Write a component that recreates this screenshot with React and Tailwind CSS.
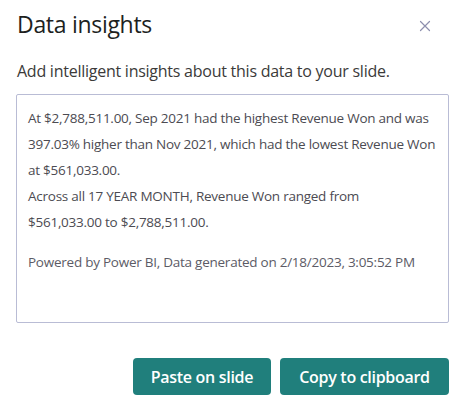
export default function App() {
  const lines = [
    "At $2,788,511.00, Sep 2021 had the highest Revenue Won and was",
    "397.03% higher than Nov 2021, which had the lowest Revenue Won",
    "at $561,033.00.",
    "Across all 17 YEAR MONTH, Revenue Won ranged from",
    "$561,033.00 to $2,788,511.00.",
  ];
  return (
    <div className="w-[466px] h-[411px] bg-white flex flex-col px-[16px] pt-[6px] text-[#252423]" style={{ fontFamily: '"Open Sans", "Noto Sans", sans-serif' }}>
      <div className="flex items-center justify-between h-[36px]">
        <h1 className="text-[23px] leading-none text-[#201f1e] pl-[1px] tracking-[-0.3px]">Data insights</h1>
        <svg width="12" height="12" viewBox="0 0 12 12" className="mr-[19px] mt-[4px]">
          <path d="M1.5 1.5 L10.5 10.5 M10.5 1.5 L1.5 10.5" stroke="#8d8fae" strokeWidth="1.2" strokeLinecap="round" />
        </svg>
      </div>
      <p className="mt-[19px] text-[16px] leading-[20px] text-[#3b3a39] pl-[1px] tracking-[-0.25px]">Add intelligent insights about this data to your slide.</p>
      <div className="mt-[13px] w-[433px] h-[229px] border border-[#b9bcd5] rounded-[2px] pl-[11px] pt-[10px] text-[13.5px] leading-[26px] text-[#4c4b52] tracking-[-0.25px]">
        {lines.map((l) => (
          <div key={l} className="whitespace-nowrap">{l}</div>
        ))}
        <div className="mt-[14px] whitespace-nowrap text-[#5c5b66]">Powered by Power BI, Data generated on 2/18/2023, 3:05:52 PM</div>
      </div>
      <div className="mt-[35px] flex justify-end gap-[9px] w-[433px]">
        <button className="w-[138px] h-[37px] rounded-[4px] bg-[#207f7c] text-white text-[16px] font-semibold tracking-[-0.3px]">Paste on slide</button>
        <button className="w-[169px] h-[37px] rounded-[4px] bg-[#207f7c] text-white text-[16px] font-semibold tracking-[-0.3px]">Copy to clipboard</button>
      </div>
    </div>
  );
}
